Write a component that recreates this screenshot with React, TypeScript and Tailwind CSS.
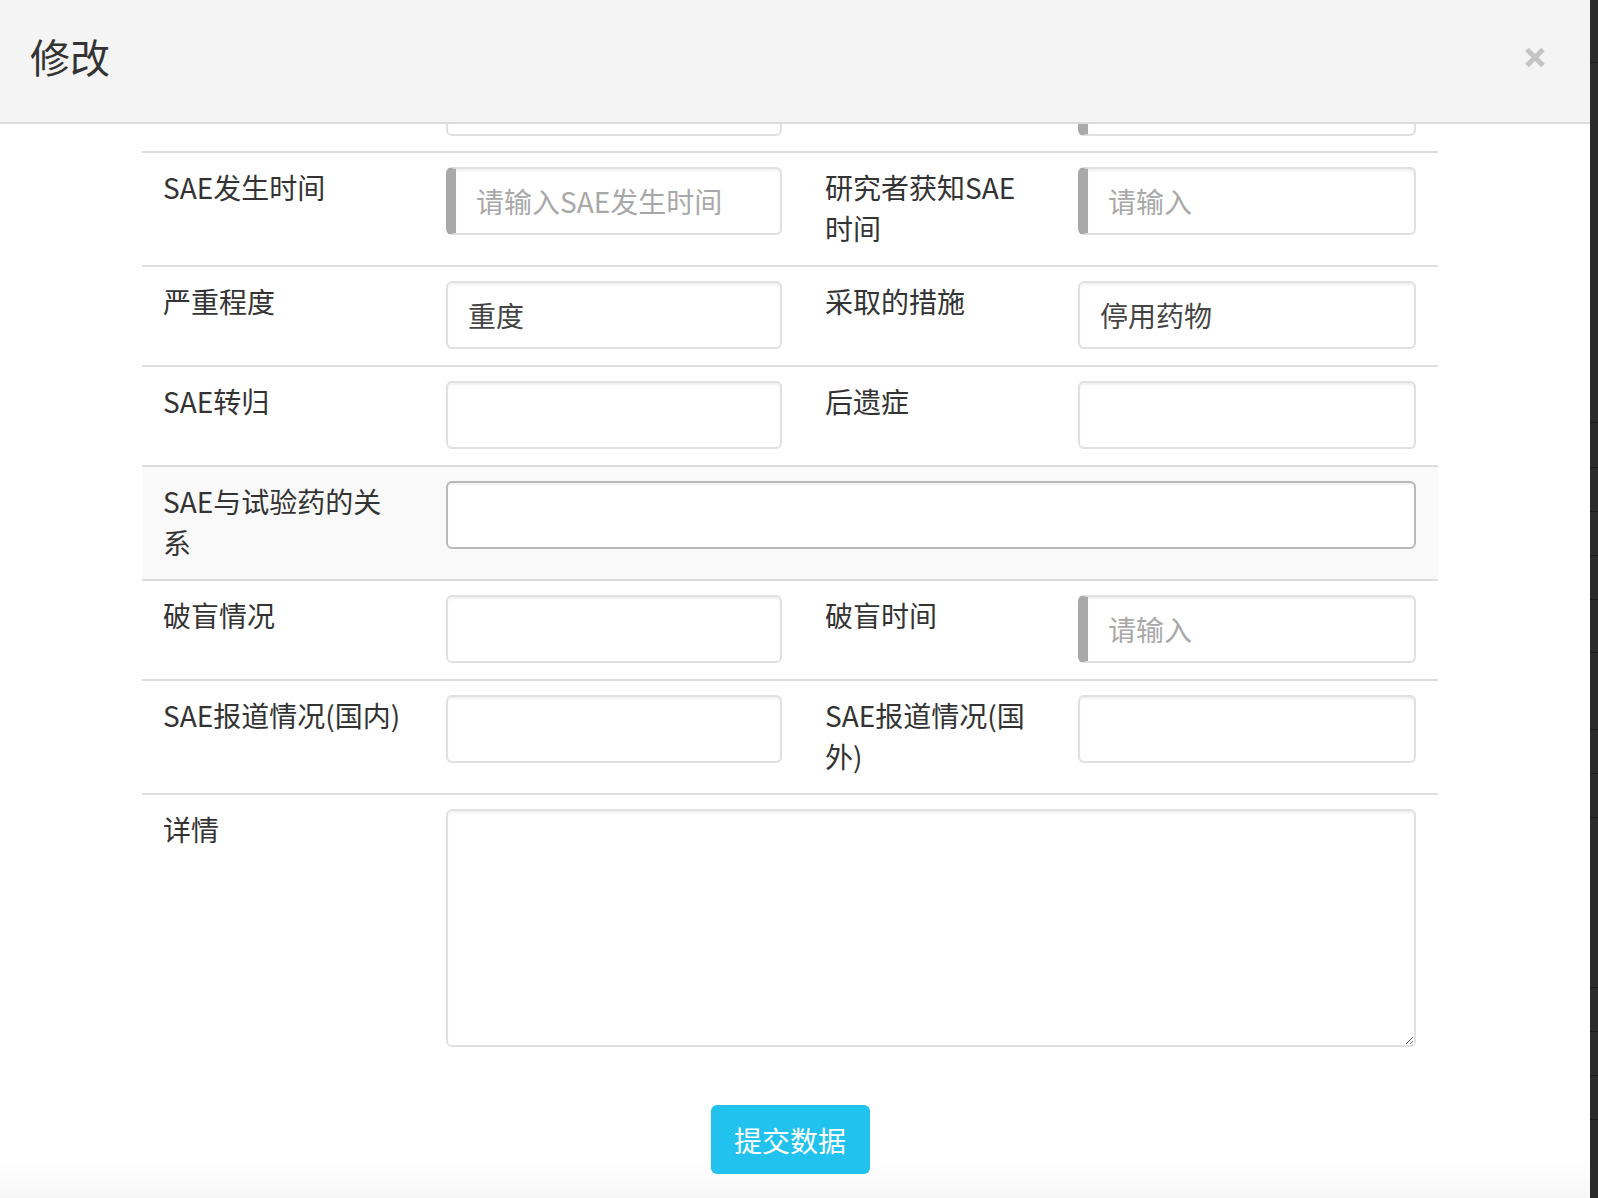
import clsx from "clsx"

type Cell = {
  label?: string[]
  bar?: boolean
  placeholder?: string
  value?: string
}

type Row =
  | { kind: "pair"; left: Cell; right: Cell }
  | { kind: "wide"; label: string[] }

const rows: Row[] = [
  {
    kind: "pair",
    left: { label: ["SAE发生时间"], bar: true, placeholder: "请输入SAE发生时间" },
    right: { label: ["研究者获知SAE", "时间"], bar: true, placeholder: "请输入" },
  },
  {
    kind: "pair",
    left: { label: ["严重程度"], value: "重度" },
    right: { label: ["采取的措施"], value: "停用药物" },
  },
  {
    kind: "pair",
    left: { label: ["SAE转归"] },
    right: { label: ["后遗症"] },
  },
  { kind: "wide", label: ["SAE与试验药的关", "系"] },
  {
    kind: "pair",
    left: { label: ["破盲情况"] },
    right: { label: ["破盲时间"], bar: true, placeholder: "请输入" },
  },
  {
    kind: "pair",
    left: { label: ["SAE报道情况(国内)"] },
    right: { label: ["SAE报道情况(国", "外)"] },
  },
]

// background page peeking out at the right edge
const stripRows = [62, 360, 45, 44, 44, 44, 53, 77, 44, 44, 170, 44, 44, 44, 44]

function Field({ bar, placeholder, value, strong }: { bar?: boolean; placeholder?: string; value?: string; strong?: boolean }) {
  return (
    <input
      readOnly
      defaultValue={value ?? ""}
      placeholder={placeholder}
      className={clsx(
        "block h-[68px] w-full rounded-[6px] border-2 bg-white pl-5 text-[28px] text-[#444] outline-none shadow-[inset_0_2px_2px_rgba(0,0,0,0.06)] placeholder:text-[#a8a8a8]",
        strong ? "border-[#b9b9b9]" : "border-[#e0e0e0]",
        bar && "border-l-[10px] border-l-[#a9a9a9]"
      )}
    />
  )
}

function Label({ lines, className }: { lines?: string[]; className?: string }) {
  return (
    <div className={clsx("whitespace-nowrap text-[28px] leading-[41px] text-[#333]", className)}>
      {lines?.map((l, i) => (
        <div key={i}>{l}</div>
      ))}
    </div>
  )
}

export default function App() {
  return (
    <div className="flex h-[1198px] w-[1598px] overflow-hidden bg-[#2b2b2b] font-['Noto_Sans_CJK_SC','Noto_Sans',sans-serif]">
      {/* Modal */}
      <div className="relative flex h-full w-[1590px] flex-col bg-white">
        {/* Header */}
        <div className="relative z-10 flex h-[124px] flex-shrink-0 items-center justify-between border-b-2 border-[#dcdcdc] bg-[#f4f4f4] pb-[10px] pl-[30px] pr-[44px]">
          <h4 className="text-[40px] leading-none text-[#333]">修改</h4>
          <svg width="22" height="21" viewBox="0 0 22 21" className="mt-[2px]">
            <path d="M3 2.5 L19 18.5 M19 2.5 L3 18.5" stroke="#c4c4c4" strokeWidth="5" />
          </svg>
        </div>

        {/* Body */}
        <div className="flex-1 overflow-hidden">
          <div className="ml-[142px] w-[1296px]">
            {/* row scrolled mostly out of view */}
            <div className="mt-[-73px] grid grid-cols-[304px_336px_296px_338px_22px] items-start border-t-2 border-[#dddddd] pb-[15px] pt-[15px]">
              <div />
              <Field />
              <div />
              <Field bar />
            </div>

            {rows.map((row, i) =>
              row.kind === "pair" ? (
                <div
                  key={i}
                  className="grid grid-cols-[304px_336px_296px_338px_22px] items-start border-t-2 border-[#dddddd] pb-4 pt-[14px]"
                >
                  <Label lines={row.left.label} className="pl-[21px]" />
                  <Field bar={row.left.bar} placeholder={row.left.placeholder} value={row.left.value} />
                  <Label lines={row.right.label} className="pl-[43px]" />
                  <Field bar={row.right.bar} placeholder={row.right.placeholder} value={row.right.value} />
                </div>
              ) : (
                <div
                  key={i}
                  className="grid grid-cols-[304px_970px_22px] items-start border-t-2 border-[#dddddd] bg-[#f9f9f9] pb-4 pt-[14px]"
                >
                  <Label lines={row.label} className="pl-[21px]" />
                  <Field strong />
                </div>
              )
            )}

            {/* 详情 */}
            <div className="grid grid-cols-[304px_970px_22px] items-start border-t-2 border-[#dddddd] pb-4 pt-[14px]">
              <Label lines={["详情"]} className="pl-[21px]" />
              <textarea
                readOnly
                className="block h-[238px] w-full rounded-[6px] border-2 border-[#e0e0e0] bg-white p-5 text-[28px] text-[#444] outline-none shadow-[inset_0_2px_2px_rgba(0,0,0,0.06)]"
              />
            </div>

            <div className="relative z-10 mt-[42px] flex justify-center">
              <button className="h-[69px] w-[159px] rounded-[6px] bg-[#22c2ee] text-[28px] text-white">
                提交数据
              </button>
            </div>
          </div>
        </div>

        {/* soft fade at the bottom edge */}
        <div className="pointer-events-none absolute bottom-0 left-0 right-0 h-[40px] bg-gradient-to-b from-white/0 to-[#f7f7f7]" />
      </div>

      {/* Background page strip */}
      <div className="flex w-[8px] flex-col">
        {stripRows.map((h, i) => (
          <div key={i} className={clsx("flex-shrink-0", i > 0 && "border-t border-[#1c1c1c]")} style={{ height: h }} />
        ))}
      </div>
    </div>
  )
}
